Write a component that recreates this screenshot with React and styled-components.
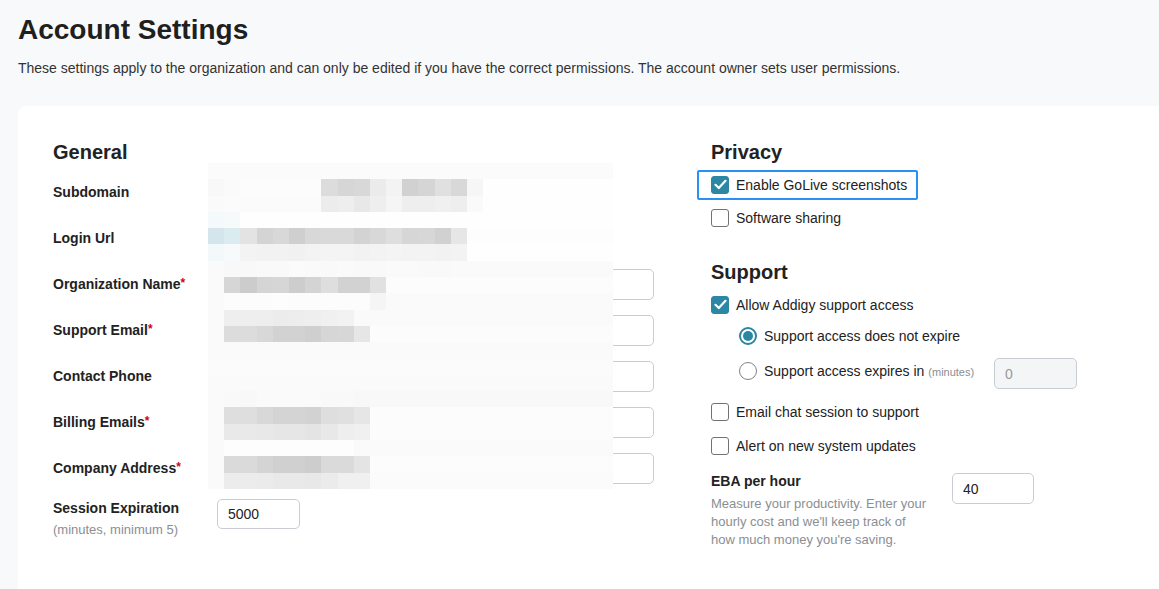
import React from 'react';
import styled, { createGlobalStyle } from 'styled-components';

const GlobalStyle = createGlobalStyle`
    body {
        margin: 0;
        background: #f8f9fb;
        font-family: "Liberation Sans", Arial, sans-serif;
        color: #222;
        overflow: hidden;
    }
`;

const Page = styled.div`
    padding: 12px 0 0 18px;
`;

const Title = styled.h1`
    margin: 0;
    font-size: 28px;
    line-height: 36px;
    font-weight: 700;
    color: #1f1f1f;
`;

const Intro = styled.p`
    margin: 11px 0 0;
    font-size: 14px;
    line-height: 18px;
    color: #333;
`;

const Card = styled.div`
    margin-top: 29px;
    margin-right: -40px;
    background: #fff;
    border-radius: 8px 0 0 0;
    padding: 34px 35px 60px;
    display: grid;
    grid-template-columns: 601px 1fr;
    column-gap: 57px;
`;

const Column = styled.div`
    position: relative;
    display: flex;
    flex-direction: column;
`;

const Heading = styled.h2`
    margin: 0 0 ${(p) => p.gap || 0}px;
    margin-top: ${(p) => p.top || 0}px;
    font-size: 20px;
    line-height: 24px;
    font-weight: 700;
    color: #222;
`;

const FieldRow = styled.div`
    display: grid;
    grid-template-columns: 155px 1fr;
    align-items: center;
    height: 46px;
`;

const Label = styled.label`
    font-size: 14px;
    font-weight: 700;
    color: #222;
`;

const Required = styled.span`
    color: #d0021b;
    font-size: 12px;
    vertical-align: top;
`;

const TextInput = styled.input`
    box-sizing: border-box;
    width: ${(p) => p.w || '100%'};
    height: ${(p) => p.h || 31}px;
    border: 1px solid #c9ccd2;
    border-radius: 5px;
    background: ${(p) => (p.disabled ? '#f4f5f7' : '#fff')};
    padding: 0 10px;
    font-family: inherit;
    font-size: 14px;
    color: ${(p) => (p.disabled ? '#999' : '#222')};
    outline: none;
`;

const SessionRow = styled.div`
    display: grid;
    grid-template-columns: 164px 83px;
    align-items: start;
    margin-top: 8px;
`;

const Hint = styled.div`
    margin-top: 5px;
    font-size: 13px;
    color: #8a8e94;
`;

/* pixelated redaction over the private values */
const Mosaic = styled.div`
    position: absolute;
    left: 155px;
    top: 23px;
    display: grid;
    grid-template-columns: repeat(25, 16.2px);
    grid-auto-rows: 16.3px;
`;

const Cell = styled.div`
    background: ${(p) => p.c};
`;

const mosaicRows = [
    [251],
    [248, 250, 252, 252, 252, 252, 252, 220, 214, 216, 235, 243, 209, 213, 224, 216, 246, 254],
    [250, 251, 251, 251, 251, 251, 251, 236, 238, 232, 238, 245, 238, 238, 240, 238, 250, 254],
    ['#f4f9fb', '#f6fafb', 254],
    ['#d4e6ec', '#dbecf0', 227, 212, 216, 207, 216, 217, 217, 211, 216, 222, 214, 215, 209, 230, 253],
    ['#f3f9fb', '#f6fafb', 243, 242, 242, 241, 243, 244, 244, 242, 243, 244, 243, 243, 242, 243, 254],
    [250, 248, 248, 249, 249, 251, 250, 249, 250, 249, 249, 250, 250, 249, 249, 250, 250],
    [250, 214, 204, 213, 214, 205, 212, 222, 210, 210, 225, 252],
    [250, 252, 252, 252, 253, 252, 252, 252, 252, 252, 245, 250],
    [250, 238, 238, 238, 236, 237, 238, 240, 242, 250],
    [250, 220, 220, 216, 210, 210, 207, 214, 215, 230, 252],
    [250],
    [251],
    [250],
    [250, 249, 248, 250, 250, 250, 250, 249, 249, 248],
    [250, 222, 222, 216, 212, 212, 210, 222, 224, 230, 252],
    [250, 233, 233, 232, 230, 230, 228, 232, 238, 240, 252],
    [250, 253, 253, 253, 253, 253, 253, 253, 253, 250],
    [250, 218, 218, 212, 208, 208, 205, 218, 218, 228, 252],
    [250, 236, 236, 235, 233, 233, 232, 235, 240, 240, 251],
];

const toColor = (v) => (typeof v === 'string' ? v : `rgb(${v},${v},${v})`);

const Redaction = () => (
    <Mosaic>
        {mosaicRows.map((row, r) =>
            Array.from({ length: 25 }, (_, c) => {
                const v = c < row.length ? row[c] : row[row.length - 1];
                return <Cell key={`${r}-${c}`} c={toColor(v)} />;
            })
        )}
    </Mosaic>
);

const CheckRow = styled.div`
    display: flex;
    align-items: ${(p) => (p.bottom ? 'flex-end' : 'center')};
    height: ${(p) => p.h || 33}px;
    padding-left: ${(p) => p.indent || 0}px;
`;

const Option = styled.label`
    display: inline-flex;
    align-items: center;
    gap: 7px;
    font-size: 14px;
    color: #222;
    ${(p) =>
        p.focused &&
        `
        margin-left: -14px;
        padding: 4px 9px 4px 12px;
        border: 2px solid #2c90f0;
        border-radius: 2px;
    `}
`;

const Box = styled.span`
    box-sizing: border-box;
    width: 18px;
    height: 18px;
    border-radius: 3px;
    display: inline-flex;
    align-items: center;
    justify-content: center;
    background: ${(p) => (p.checked ? '#2b87a3' : '#fff')};
    border: 1px solid ${(p) => (p.checked ? '#2b87a3' : '#707276')};
`;

const Radio = styled.span`
    box-sizing: border-box;
    width: 18px;
    height: 18px;
    border-radius: 50%;
    border: ${(p) => (p.checked ? '2px solid #2b87a3' : '1px solid #808285')};
    display: inline-flex;
    align-items: center;
    justify-content: center;

    &::after {
        content: '';
        display: ${(p) => (p.checked ? 'block' : 'none')};
        width: 10px;
        height: 10px;
        border-radius: 50%;
        background: #2b87a3;
    }
`;

const Small = styled.span`
    font-size: 11px;
    color: #8a8e94;
    margin-left: 4px;
`;

const Checkbox = ({ checked, children, focused }) => (
    <Option focused={focused}>
        <Box checked={checked}>
            {checked && (
                <svg width="13" height="11" viewBox="0 0 13 11">
                    <path d="M1.5 5.8 L4.8 9 L11.5 1.8" fill="none" stroke="#fff" strokeWidth="2.2" strokeLinecap="round" strokeLinejoin="round" />
                </svg>
            )}
        </Box>
        {children}
    </Option>
);

const ExpireRow = styled.div`
    display: grid;
    grid-template-columns: 255px 83px;
    align-items: center;
    height: 35px;
    margin-top: 3px;
    padding-left: 28px;
`;

const ExpireInput = styled(TextInput)`
    margin-top: 5px;
`;

const EbaRow = styled.div`
    display: grid;
    grid-template-columns: 241px 82px;
    align-items: start;
    margin-top: 18px;
`;

const EbaTitle = styled.div`
    font-size: 14px;
    font-weight: 700;
    color: #222;
`;

const EbaText = styled.div`
    margin-top: 6px;
    width: 222px;
    font-size: 13px;
    line-height: 18px;
    color: #8a8e94;
`;

const fields = [
    { label: 'Subdomain' },
    { label: 'Login Url' },
    { label: 'Organization Name', required: true, input: true },
    { label: 'Support Email', required: true, input: true },
    { label: 'Contact Phone', input: true },
    { label: 'Billing Emails', required: true, input: true },
    { label: 'Company Address', required: true, input: true },
];

const App = () => (
    <>
        <GlobalStyle />
        <Page>
            <Title>Account Settings</Title>
            <Intro>
                These settings apply to the organization and can only be edited if you have the correct permissions. The
                account owner sets user permissions.
            </Intro>
            <Card>
                <Column>
                    <Heading gap={5}>General</Heading>
                    {fields.map((f) => (
                        <FieldRow key={f.label}>
                            <Label>
                                {f.label}
                                {f.required && <Required>*</Required>}
                            </Label>
                            {f.input ? <TextInput defaultValue="" /> : <span />}
                        </FieldRow>
                    ))}
                    <SessionRow>
                        <div>
                            <Label>Session Expiration</Label>
                            <Hint>(minutes, minimum 5)</Hint>
                        </div>
                        <TextInput w="83px" h={30} defaultValue="5000" />
                    </SessionRow>
                    <Redaction />
                </Column>
                <Column>
                    <Heading gap={4}>Privacy</Heading>
                    <CheckRow>
                        <Checkbox checked focused>
                            Enable GoLive screenshots
                        </Checkbox>
                    </CheckRow>
                    <CheckRow>
                        <Checkbox>Software sharing</Checkbox>
                    </CheckRow>
                    <Heading top={26} gap={4}>
                        Support
                    </Heading>
                    <CheckRow>
                        <Checkbox checked>Allow Addigy support access</Checkbox>
                    </CheckRow>
                    <CheckRow h={29} indent={28}>
                        <Option>
                            <Radio checked />
                            Support access does not expire
                        </Option>
                    </CheckRow>
                    <ExpireRow>
                        <Option>
                            <Radio />
                            <span>
                                Support access expires in<Small>(minutes)</Small>
                            </span>
                        </Option>
                        <ExpireInput disabled defaultValue="0" />
                    </ExpireRow>
                    <CheckRow h={33} bottom>
                        <Checkbox>Email chat session to support</Checkbox>
                    </CheckRow>
                    <CheckRow h={34} bottom>
                        <Checkbox>Alert on new system updates</Checkbox>
                    </CheckRow>
                    <EbaRow>
                        <div>
                            <EbaTitle>EBA per hour</EbaTitle>
                            <EbaText>
                                Measure your productivity. Enter your hourly cost and we'll keep track of how much money
                                you're saving.
                            </EbaText>
                        </div>
                        <TextInput h={31} defaultValue="40" />
                    </EbaRow>
                </Column>
            </Card>
        </Page>
    </>
);

export default App;
